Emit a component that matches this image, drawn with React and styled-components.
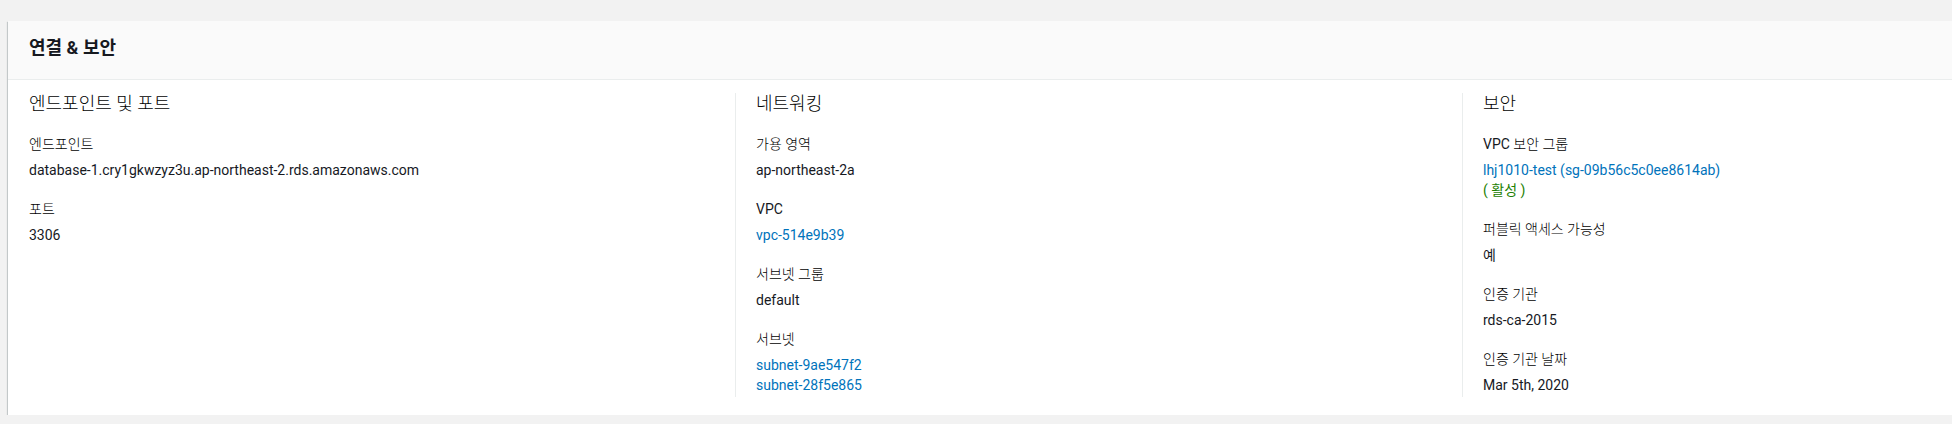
import React from 'react';
import styled, { createGlobalStyle } from 'styled-components';

const GlobalStyle = createGlobalStyle`
  html, body {
    margin: 0;
    padding: 0;
    background: #f2f2f2;
    overflow: hidden;
  }
  body {
    font-family: Roboto, "Noto Sans CJK KR", sans-serif;
    color: #16191f;
  }
`;

const Page = styled.div`
  padding: 21px 0 0 8px;
  width: 1944px;
  overflow: hidden;
`;

const Card = styled.div`
  width: 2200px;
  background: #fff;
  box-shadow: 0 1px 1px 0 rgba(0, 28, 36, 0.3), 1px 1px 1px 0 rgba(0, 28, 36, 0.15),
    -1px 1px 1px 0 rgba(0, 28, 36, 0.15);
`;

const Header = styled.div`
  background: #fafafa;
  border-bottom: 1px solid #eaeded;
  padding: 16px 20px 20px 21px;
`;

const Title = styled.h2`
  margin: 0;
  font-size: 18px;
  line-height: 22px;
  font-weight: 700;
  color: #16191f;
`;

const Body = styled.div`
  display: grid;
  grid-template-columns: repeat(3, 727px);
  padding: 13px 0 18px 0;
`;

const Column = styled.div`
  padding: 0 20px 2px 20px;
  border-left: 1px solid ${(p) => (p.$first ? 'transparent' : '#eaeded')};
`;

const ColumnTitle = styled.h3`
  margin: 0 0 19px 0;
  font-size: 18px;
  line-height: 22px;
  font-weight: 300;
  color: #000;
`;

const Field = styled.div`
  margin-bottom: 19px;
  &:last-child {
    margin-bottom: 0;
  }
`;

const Label = styled.div`
  font-size: 14px;
  line-height: 20px;
  margin-bottom: 6px;
  font-weight: 300;
  color: #000;
`;

/* latin parts of a label keep the regular weight */
const Latin = styled.span`
  font-weight: 400;
  color: #16191f;
`;

const Value = styled.div`
  font-size: 14px;
  line-height: 20px;
  color: ${(p) => (p.$tone === 'link' ? '#0073bb' : p.$tone === 'ok' ? '#1d8102' : '#16191f')};
`;

const columns = [
  {
    title: '엔드포인트 및 포트',
    fields: [
      { label: '엔드포인트', values: [{ text: 'database-1.cry1gkwzyz3u.ap-northeast-2.rds.amazonaws.com' }] },
      { label: '포트', values: [{ text: '3306' }] },
    ],
  },
  {
    title: '네트워킹',
    fields: [
      { label: '가용 영역', values: [{ text: 'ap-northeast-2a' }] },
      { label: 'VPC', latin: 'VPC', values: [{ text: 'vpc-514e9b39', tone: 'link' }] },
      { label: '서브넷 그룹', values: [{ text: 'default' }] },
      {
        label: '서브넷',
        values: [
          { text: 'subnet-9ae547f2', tone: 'link' },
          { text: 'subnet-28f5e865', tone: 'link' },
        ],
      },
    ],
  },
  {
    title: '보안',
    fields: [
      {
        label: 'VPC 보안 그룹',
        latin: 'VPC',
        values: [
          { text: 'lhj1010-test (sg-09b56c5c0ee8614ab)', tone: 'link' },
          { text: '( 활성 )', tone: 'ok' },
        ],
      },
      { label: '퍼블릭 액세스 가능성', values: [{ text: '예' }] },
      { label: '인증 기관', values: [{ text: 'rds-ca-2015' }] },
      { label: '인증 기관 날짜', values: [{ text: 'Mar 5th, 2020' }] },
    ],
  },
];

function renderLabel(f) {
  if (!f.latin) return f.label;
  return (
    <>
      <Latin>{f.latin}</Latin>
      {f.label.slice(f.latin.length)}
    </>
  );
}

export default function App() {
  return (
    <>
      <GlobalStyle />
      <Page>
        <Card>
          <Header>
            <Title>연결 &amp; 보안</Title>
          </Header>
          <Body>
            {columns.map((col, i) => (
              <Column key={col.title} $first={i === 0}>
                <ColumnTitle>{col.title}</ColumnTitle>
                {col.fields.map((f) => (
                  <Field key={f.label}>
                    <Label>{renderLabel(f)}</Label>
                    {f.values.map((v) => (
                      <Value key={v.text} $tone={v.tone}>{v.text}</Value>
                    ))}
                  </Field>
                ))}
              </Column>
            ))}
          </Body>
        </Card>
      </Page>
    </>
  );
}
